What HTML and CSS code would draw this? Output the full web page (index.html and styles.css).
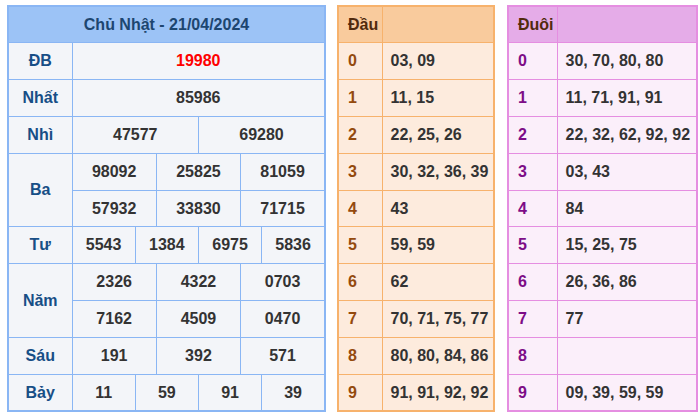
FILE: index.html
```html
<!DOCTYPE html>
<html lang="vi">
<head>
<meta charset="utf-8">
<title>Kết quả xổ số</title>
<link rel="stylesheet" href="styles.css">
</head>
<body>
<div class="wrap">
  <table class="kq">
    <colgroup>
      <col class="c-label">
      <col span="12" class="c-n">
    </colgroup>
    <thead>
      <tr><th colspan="13" class="title">Chủ Nhật - 21/04/2024</th></tr>
    </thead>
    <tbody>
      <tr><td class="lbl">ĐB</td><td colspan="12" class="num db">19980</td></tr>
      <tr><td class="lbl">Nhất</td><td colspan="12" class="num">85986</td></tr>
      <tr><td class="lbl">Nhì</td><td colspan="6" class="num">47577</td><td colspan="6" class="num">69280</td></tr>
      <tr><td class="lbl" rowspan="2">Ba</td><td colspan="4" class="num">98092</td><td colspan="4" class="num">25825</td><td colspan="4" class="num">81059</td></tr>
      <tr><td colspan="4" class="num">57932</td><td colspan="4" class="num">33830</td><td colspan="4" class="num">71715</td></tr>
      <tr><td class="lbl">Tư</td><td colspan="3" class="num">5543</td><td colspan="3" class="num">1384</td><td colspan="3" class="num">6975</td><td colspan="3" class="num">5836</td></tr>
      <tr><td class="lbl" rowspan="2">Năm</td><td colspan="4" class="num">2326</td><td colspan="4" class="num">4322</td><td colspan="4" class="num">0703</td></tr>
      <tr><td colspan="4" class="num">7162</td><td colspan="4" class="num">4509</td><td colspan="4" class="num">0470</td></tr>
      <tr><td class="lbl">Sáu</td><td colspan="4" class="num">191</td><td colspan="4" class="num">392</td><td colspan="4" class="num">571</td></tr>
      <tr><td class="lbl">Bảy</td><td colspan="3" class="num">11</td><td colspan="3" class="num">59</td><td colspan="3" class="num">91</td><td colspan="3" class="num">39</td></tr>
    </tbody>
  </table>

  <table class="lt dau">
    <thead><tr><th class="k">Đầu</th><th class="v"></th></tr></thead>
    <tbody>
      <tr><td class="k">0</td><td class="v">03, 09</td></tr>
      <tr><td class="k">1</td><td class="v">11, 15</td></tr>
      <tr><td class="k">2</td><td class="v">22, 25, 26</td></tr>
      <tr><td class="k">3</td><td class="v">30, 32, 36, 39</td></tr>
      <tr><td class="k">4</td><td class="v">43</td></tr>
      <tr><td class="k">5</td><td class="v">59, 59</td></tr>
      <tr><td class="k">6</td><td class="v">62</td></tr>
      <tr><td class="k">7</td><td class="v">70, 71, 75, 77</td></tr>
      <tr><td class="k">8</td><td class="v">80, 80, 84, 86</td></tr>
      <tr><td class="k">9</td><td class="v">91, 91, 92, 92</td></tr>
    </tbody>
  </table>

  <table class="lt duoi">
    <thead><tr><th class="k">Đuôi</th><th class="v"></th></tr></thead>
    <tbody>
      <tr><td class="k">0</td><td class="v">30, 70, 80, 80</td></tr>
      <tr><td class="k">1</td><td class="v">11, 71, 91, 91</td></tr>
      <tr><td class="k">2</td><td class="v">22, 32, 62, 92, 92</td></tr>
      <tr><td class="k">3</td><td class="v">03, 43</td></tr>
      <tr><td class="k">4</td><td class="v">84</td></tr>
      <tr><td class="k">5</td><td class="v">15, 25, 75</td></tr>
      <tr><td class="k">6</td><td class="v">26, 36, 86</td></tr>
      <tr><td class="k">7</td><td class="v">77</td></tr>
      <tr><td class="k">8</td><td class="v"></td></tr>
      <tr><td class="k">9</td><td class="v">09, 39, 59, 59</td></tr>
    </tbody>
  </table>
</div>
</body>
</html>
```
FILE: styles.css
```css
html, body {
  margin: 0;
  padding: 0;
  background: #ffffff;
}
body {
  font-family: "Liberation Sans", Arial, sans-serif;
  font-size: 16px;
  font-weight: bold;
  color: #333333;
}
.wrap {
  display: flex;
  align-items: flex-start;
  gap: 11px;
  padding: 5px 0 0 7px;
}
table {
  border-collapse: collapse;
  table-layout: fixed;
}
th, td {
  height: 36.9px;
  padding: 0;
  box-sizing: border-box;
}
thead th {
  height: 36.5px;
}

/* Main results table */
.kq {
  width: 319px;
  border: 2px solid #8ab6f4;
}
.kq .c-label { width: 64px; }
.kq td, .kq th {
  border: 1px solid #8ab6f4;
  text-align: center;
}
.kq .title {
  background: #9cc3f6;
  color: #1d4670;
  font-size: 16px;
}
.kq td {
  background: #f3f5f9;
}
.kq .lbl {
  color: #174e86;
}
.kq .num {
  color: #333333;
}
.kq .db {
  color: #ff0000;
}

/* Loto head/tail tables */
.lt td, .lt th {
  text-align: left;
  padding-left: 9px;
}
.lt .v { padding-left: 8px; }
.lt th {
  color: #512a0c;
}
.dau {
  width: 158px;
  border: 2px solid #f7b26c;
}
.dau th.k, .dau td.k { width: 44px; }
.dau td, .dau th { border: 1px solid #f7b26c; }
.dau th { background: #f9cb9d; }
.dau td { background: #fdebdd; }
.dau td.k { color: #944a0e; }

.duoi {
  width: 191px;
  margin-left: 1px;
  border: 2px solid #e58ee1;
}
.duoi th.k, .duoi td.k { width: 49px; }
.duoi td, .duoi th { border: 1px solid #e58ee1; }
.duoi th { background: #e5ace8; }
.duoi td { background: #fbeffa; }
.duoi td.k { color: #7d0d87; }
```
